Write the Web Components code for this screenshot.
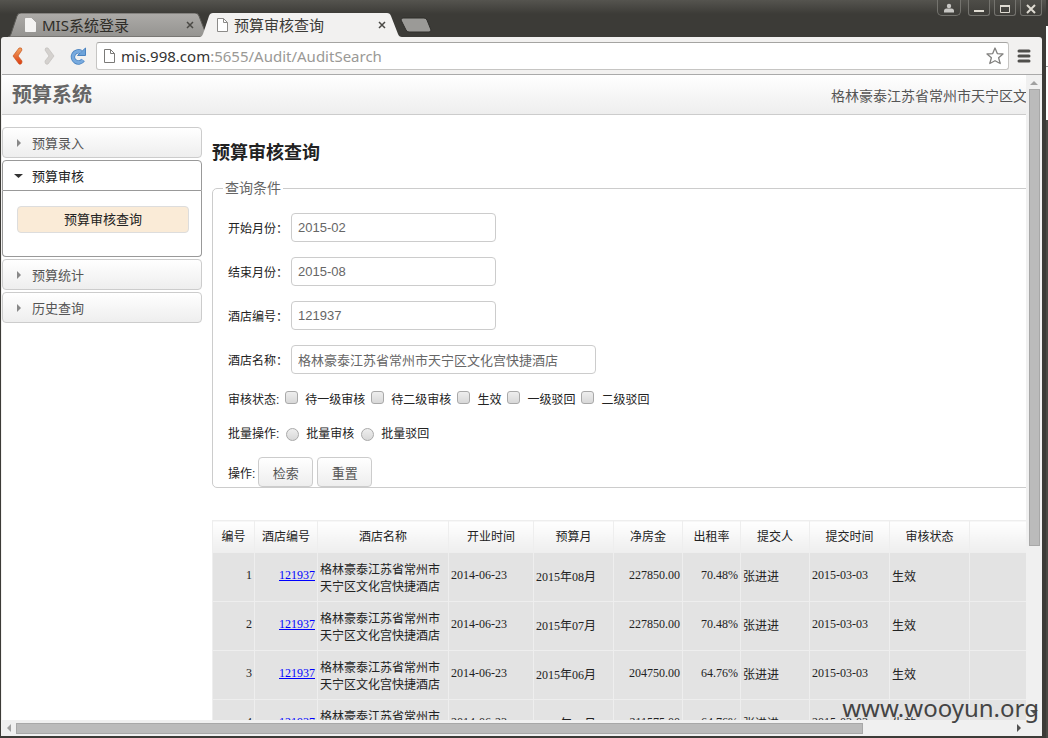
<!DOCTYPE html>
<html lang="zh-CN">
<head>
<meta charset="utf-8">
<title>预算审核查询</title>
<style>
  body {
    margin: 0;
    height: 100vh;
    overflow: hidden;
    background: #3c3b37;
    font-family: "Liberation Sans", "Noto Sans CJK SC", sans-serif;
    font-size: 12px;
    color: #222;
  }
</style>
</head>
<body>
<browser-window>
  <browser-tab slot="tabs" label="MIS系统登录"></browser-tab>
  <browser-tab slot="tabs" label="预算审核查询" active></browser-tab>
  <tool-bar slot="toolbar" host="mis.998.com" path=":5655/Audit/AuditSearch"></tool-bar>
  <page-header brand="预算系统">格林豪泰江苏省常州市天宁区文化宫快捷酒店</page-header>
  <page-layout>
    <side-menu slot="side">
      <menu-section label="预算录入"></menu-section>
      <menu-section label="预算审核" open>预算审核查询</menu-section>
      <menu-section label="预算统计"></menu-section>
      <menu-section label="历史查询"></menu-section>
    </side-menu>
    <search-form></search-form>
    <audit-table></audit-table>
  </page-layout>
</browser-window>
<water-mark>www.wooyun.org</water-mark>

<script>
class BaseElement extends HTMLElement {
  connectedCallback() {
    if (this.shadowRoot) return;
    this.attachShadow({ mode: "open" });
    this.shadowRoot.innerHTML = this.template;
  }
}

const docIcon = (fill, stroke) => `
  <svg width="13" height="16" viewBox="0 0 13 16" aria-hidden="true">
    <path d="M1.500 1.500h6l4 4v9h-10z" fill="${fill}" stroke="${stroke}"/>
    <path d="M7.500 1.500v4h4" fill="none" stroke="${stroke}"/>
  </svg>`;

class BrowserWindow extends BaseElement {
  get template() {
    return `
      <style>
        :host {
          display: flex;
          flex-direction: column;
          height: 100vh;
          box-sizing: border-box;
          padding: 0 6px 2px 1px;
          background:
            linear-gradient(#3c3b37 26px, #fff 26px, #fff 66px, #999 66px, #999 67px, #fff 67px, #fff 120px, #4a4944 120px) right / 2px 100% no-repeat,
            linear-gradient(#55544f, #3c3b37 14px);
        }
        .title {
          display: flex;
          justify-content: space-between;
          height: 37px;
          flex: none;
        }
        .tabs {
          display: flex;
          align-items: flex-end;
          padding-left: 7px;
        }
        .new {
          width: 32px;
          height: 16px;
          margin: 0 0 4px -4px;
          padding: 0;
          border: 0;
          background: none;
        }
        .new svg { display: block; }
        .controls { display: flex; gap: 4px; }
        .controls button {
          width: 22px;
          height: 16px;
          padding: 0;
          border: 1px solid #74736e;
          border-top: 0;
          border-radius: 0 0 3px 3px;
          background: linear-gradient(#4e4d48, #3f3e3a);
        }
        .controls .user {
          width: 24px;
          margin-right: 3px;
          border-radius: 0 0 5px 5px;
        }
        .controls svg { display: block; margin: auto; }
        .frame {
          flex: 1;
          min-height: 0;
          display: flex;
          flex-direction: column;
          background: #f2f1f0;
          border-radius: 3px 3px 0 0;
          padding-left: 1px;
        }
        .view {
          flex: 1;
          min-height: 0;
          display: grid;
          grid-template: minmax(0, 1fr) 16px / minmax(0, 1fr) 16px;
          background: #f0f0f0;
        }
        .page { overflow: hidden; background: #fff; }
        .content { min-width: 1200px; }
      </style>
      <div class="title">
        <div class="tabs">
          <slot name="tabs"></slot>
          <button class="new" aria-label="New tab">
            <svg width="32" height="16" viewBox="0 0 32 16"><path d="M3 1h21q2 0 3 2l4 10q0 2-2 2H9q-2 0-3-2L1 3q0-2 2-2z" fill="#9b9a97" stroke="#2f2e2b"/></svg>
          </button>
        </div>
        <div class="controls">
          <button class="user" aria-label="User">
            <svg width="12" height="14" viewBox="0 0 12 14" fill="#c8c7c4"><circle cx="6" cy="5" r="2.200"/><path d="M1 11.500V10q0-2.500 2.500-2.500h5Q11 7.500 11 10v1.500z"/></svg>
          </button>
          <button aria-label="Minimize">
            <svg width="12" height="14"><path d="M1 9h10v2H1z" fill="#dfdbd2"/></svg>
          </button>
          <button aria-label="Maximize">
            <svg width="12" height="14"><path d="M1.500 4.500h9v7h-9z" fill="none" stroke="#dfdbd2"/><path d="M1 4h10v2H1z" fill="#dfdbd2"/></svg>
          </button>
          <button aria-label="Close">
            <svg width="12" height="14"><path d="M2 4l8 8M10 4l-8 8" stroke="#dfdbd2" stroke-width="2"/></svg>
          </button>
        </div>
      </div>
      <div class="frame">
        <slot name="toolbar"></slot>
        <div class="view">
          <div class="page"><div class="content"><slot></slot></div></div>
          <scroll-bar size="74"></scroll-bar>
          <scroll-bar size="85" horizontal></scroll-bar>
        </div>
      </div>
    `;
  }
}

class BrowserTab extends BaseElement {
  get template() {
    const active = this.hasAttribute("active");
    return `
      <style>
        :host {
          display: block;
          position: relative;
          width: 204px;
          height: 24px;
          font: 15px/24px "Noto Sans", "Noto Sans CJK SC", sans-serif;
          color: #2f2d28;
        }
        :host([active]) {
          z-index: 1;
          margin-left: -12px;
          color: #3c3b37;
        }
        .shape { position: absolute; top: 0; left: 0; }
        .row {
          position: relative;
          display: flex;
          align-items: center;
          gap: 5px;
          padding: 0 16px;
        }
        .label { flex: 1; }
        button {
          display: flex;
          width: 12px;
          height: 12px;
          padding: 0;
          border: 0;
          background: none;
        }
      </style>
      <svg class="shape" width="204" height="24" viewBox="0 0 204 24">
        <defs><linearGradient id="g" x2="0" y2="1"><stop stop-color="#adaba8"/><stop offset="1" stop-color="#949390"/></linearGradient></defs>
        <path d="M0 24q2 0 3-3L9 3q1-3 4-3h174q3 0 4 3l7 18q1 3 4 3z" fill="${active ? "#f2f1f0" : "url(#g)"}" stroke="${active ? "none" : "#5c5b57"}"/>
      </svg>
      <div class="row">
        ${active ? docIcon("#fff", "#8c8b89") : docIcon("#f4f3f2", "#f4f3f2")}
        <span class="label">${this.getAttribute("label")}</span>
        <button aria-label="Close tab">
          <svg width="12" height="12"><path d="M3 3l6 6M9 3l-6 6" stroke="#4a4945" stroke-width="1.500"/></svg>
        </button>
      </div>
    `;
  }
}

class ToolBar extends BaseElement {
  get template() {
    const host = this.getAttribute("host");
    const path = this.getAttribute("path");
    return `
      <style>
        :host {
          display: flex;
          align-items: center;
          height: 37px;
          border-bottom: 1px solid #aaa;
          padding: 0 11px 0 9px;
        }
        button { display: flex; padding: 0; border: 0; background: none; }
        .nav { display: flex; gap: 11px; padding-right: 9px; }
        .url {
          flex: 1;
          display: flex;
          align-items: center;
          gap: 5px;
          height: 26px;
          border: 1px solid #c6c5c3;
          border-top-color: #a5a4a2;
          border-radius: 3px;
          background: #fff;
          padding: 0 4px 0 6px;
        }
        .text {
          flex: 1;
          font: 15px/24px "Noto Sans", sans-serif;
          color: #9a9996;
        }
        .text b { font-weight: normal; color: #333; }
        .menu { margin-left: 8px; }
      </style>
      <div class="nav">
        <button aria-label="Back">
          <svg width="18" height="20" viewBox="0 0 18 20">
            <defs><linearGradient id="o" x2="0" y2="1"><stop stop-color="#f2a560"/><stop offset="1" stop-color="#dc3c12"/></linearGradient></defs>
            <path d="M2 10l6-8q3-1 3 2l-4 6 4 5q0 4-3 3z" fill="url(#o)" stroke="#c8561f" stroke-width=".7"/>
          </svg>
        </button>
        <button aria-label="Forward">
          <svg width="18" height="20" viewBox="0 0 18 20"><path d="M14 10L8 2Q5 1 5 4l4 6-4 5q0 4 3 3z" fill="#d4d1ce" stroke="#c2bfbc" stroke-width=".7"/></svg>
        </button>
        <button aria-label="Reload">
          <svg width="18" height="20" viewBox="0 0 18 20">
            <path d="M12 6A5.500 5.500 0 1 0 14 14" fill="none" stroke="#4a83c0" stroke-width="4.500"/>
            <path d="M16.500 2v7.500H8.500z" fill="#6da3da" stroke="#4a83c0"/>
            <path d="M12 6A5.500 5.500 0 1 0 14 14" fill="none" stroke="#78aade" stroke-width="3"/>
          </svg>
        </button>
      </div>
      <div class="url">
        ${docIcon("#fff", "#7b7a78")}
        <span class="text"><b>${host}</b>${path}</span>
        <button aria-label="Bookmark">
          <svg width="18" height="18" viewBox="0 0 18 18"><path d="M9 1l2.300 5.600 5.700.4-4.400 3.800 1.600 5.700L9 13.700l-5.200 2.800 1.600-5.700L1 7l5.700-.4z" fill="#fff" stroke="#82817f" stroke-width="1.300" stroke-linejoin="round"/></svg>
        </button>
      </div>
      <button class="menu" aria-label="Menu">
        <svg width="14" height="14"><path d="M2 2h10M2 7h10M2 12h10" stroke="#504f4c" stroke-width="3" stroke-linecap="round"/></svg>
      </button>
    `;
  }
}

class ScrollBar extends BaseElement {
  get template() {
    return `
      <style>
        :host {
          display: flex;
          flex-direction: column;
          align-items: center;
          background: #f0f0f0;
        }
        :host([horizontal]) { flex-direction: row; }
        .track { flex: 1; display: flex; flex-direction: inherit; }
        .thumb {
          flex: 0 0 ${this.getAttribute("size")}%;
          box-sizing: border-box;
          width: 11px;
          border: 1px solid #a8a8a8;
          background: #bbb;
        }
        :host([horizontal]) .thumb { width: auto; height: 11px; }
        svg { flex: none; }
      </style>
      ${
        this.hasAttribute("horizontal")
          ? `<svg width="14" height="14"><path d="M9 3v8L5 7z" fill="#a0a0a0"/></svg>
             <div class="track"><div class="thumb"></div></div>
             <svg width="14" height="14"><path d="M5 3v8l4-4z" fill="#505050"/></svg>`
          : `<svg width="14" height="14"><path d="M3 10h8L7 6z" fill="#a0a0a0"/></svg>
             <div class="track"><div class="thumb"></div></div>
             <svg width="14" height="14"><path d="M3 4h8l-4 4z" fill="#505050"/></svg>`
      }
    `;
  }
}

class PageHeader extends BaseElement {
  get template() {
    return `
      <style>
        :host {
          display: flex;
          align-items: center;
          justify-content: space-between;
          height: 39px;
          padding: 0 91px 0 10px;
          border-bottom: 1px solid #ccc;
          background: linear-gradient(#fff, #eee);
          color: #555;
          font-size: 14px;
        }
        h1 { margin: 0; font-size: 20px; line-height: 24px; color: #666; }
      </style>
      <h1>${this.getAttribute("brand")}</h1>
      <span><slot></slot></span>
    `;
  }
}

class PageLayout extends BaseElement {
  get template() {
    return `
      <style>
        :host {
          display: grid;
          grid-template-columns: 200px minmax(0, 1fr);
          gap: 10px;
          padding-top: 12px;
        }
        h2 { margin: 14px 0 13px; font-size: 18px; line-height: 24px; }
      </style>
      <slot name="side"></slot>
      <main>
        <h2>预算审核查询</h2>
        <slot></slot>
      </main>
    `;
  }
}

class SideMenu extends BaseElement {
  get template() {
    return `
      <style>
        :host { display: flex; flex-direction: column; gap: 2px; }
      </style>
      <slot></slot>
    `;
  }
}

class MenuSection extends BaseElement {
  get template() {
    const open = this.hasAttribute("open");
    return `
      <style>
        :host { display: block; font-size: 13px; }
        .head {
          display: flex;
          align-items: center;
          gap: 8px;
          box-sizing: border-box;
          width: 100%;
          height: 31px;
          padding: 0 10px;
          border: 1px solid #ccc;
          border-radius: 4px;
          background: linear-gradient(#fff, #eee);
          font: inherit;
          color: #555;
        }
        :host([open]) .head {
          border-color: #999;
          border-radius: 4px 4px 0 0;
          background: #fff;
          color: #222;
        }
        .panel {
          border: 1px solid #999;
          border-top: 0;
          border-radius: 0 0 4px 4px;
          padding: 15px 12px 23px 14px;
        }
        .item {
          display: block;
          width: 100%;
          height: 27px;
          padding: 0 0 2px;
          border: 1px solid #ddd;
          border-radius: 4px;
          background: #faebd7;
          font: inherit;
          color: #222;
        }
      </style>
      <button class="head" aria-expanded="${open}">
        <svg width="11" height="12" aria-hidden="true"><path d="${open ? "M1 4h9L5.500 8z" : "M4 2v8l4-4z"}" fill="${open ? "#333" : "#888"}"/></svg>
        ${this.getAttribute("label")}
      </button>
      ${open ? `<div class="panel"><button class="item"><slot></slot></button></div>` : ""}
    `;
  }
}

class SearchForm extends BaseElement {
  get template() {
    const fields = [
      ["start", "开始月份", "2015-02"],
      ["end", "结束月份", "2015-08"],
      ["code", "酒店编号", "121937"],
      ["name", "酒店名称", "格林豪泰江苏省常州市天宁区文化宫快捷酒店"],
    ];
    const states = ["待一级审核", "待二级审核", "生效", "一级驳回", "二级驳回"];
    const batch = ["批量审核", "批量驳回"];
    return `
      <style>
        :host { display: block; margin-bottom: 32px; }
        fieldset {
          margin: 0;
          padding: 15px 15px 0;
          border: 1px solid #ccc;
          border-radius: 5px;
        }
        legend {
          margin-left: -5px;
          padding: 0 2px;
          font-size: 14px;
          line-height: 20px;
          color: #666;
        }
        form { display: flex; flex-direction: column; gap: 15px; }
        .field { display: flex; align-items: center; gap: 3px; height: 29px; }
        /* the TC face centres the full-width colon */
        .field label { font-family: "Liberation Sans", "Noto Sans CJK TC", sans-serif; }
        input[type="text"] {
          box-sizing: border-box;
          width: 205px;
          height: 29px;
          padding: 0 6px;
          border: 1px solid #ccc;
          border-radius: 4px;
          background: #fff;
          font: inherit;
          font-size: 13px;
          color: #666;
        }
        #name { width: 305px; }
        .options { display: flex; align-items: baseline; gap: 6px; line-height: 22px; }
        .options label { display: flex; align-items: baseline; gap: 7px; }
        .batch { gap: 7px; line-height: 16px; }
        .batch, .batch label { align-items: center; }
        .options input {
          appearance: none;
          box-sizing: border-box;
          width: 13px;
          height: 13px;
          margin: 0;
          border: 1px solid #a9a9a9;
          border-radius: 3px;
          background: linear-gradient(#eee, #d8d8d8);
        }
        .options input[type="radio"] { border-radius: 50%; }
        .actions { display: flex; align-items: center; gap: 4px; }
        .actions span { margin-right: -1px; }
        .actions button {
          width: 55px;
          height: 30px;
          padding: 0;
          border: 1px solid #ccc;
          border-radius: 4px;
          background: linear-gradient(#fff, #eee);
          font: inherit;
          font-size: 13px;
          color: #555;
        }
      </style>
      <fieldset>
        <legend>查询条件</legend>
        <form>
          ${fields
            .map(
              ([id, label, value]) => `
            <div class="field">
              <label for="${id}">${label}：</label>
              <input type="text" id="${id}" value="${value}">
            </div>`
            )
            .join("")}
          <div class="options">
            <span>审核状态:</span>
            ${states.map((s) => `<label><input type="checkbox">${s}</label>`).join("")}
          </div>
          <div class="options batch">
            <span>批量操作:</span>
            ${batch.map((s) => `<label><input type="radio" name="batch">${s}</label>`).join("")}
          </div>
          <div class="actions">
            <span>操作:</span>
            <button type="button">检索</button>
            <button type="reset">重置</button>
          </div>
        </form>
      </fieldset>
    `;
  }
}

class AuditTable extends BaseElement {
  get template() {
    const columns = [
      ["编号", 42],
      ["酒店编号", 63],
      ["酒店名称", 131],
      ["开业时间", 85],
      ["预算月", 80],
      ["净房金", 69],
      ["出租率", 58],
      ["提交人", 69],
      ["提交时间", 80],
      ["审核状态", 80],
    ];
    const rows = [
      ["2015年08月", "227850.00", "70.48%"],
      ["2015年07月", "227850.00", "70.48%"],
      ["2015年06月", "204750.00", "64.76%"],
      ["2015年05月", "211575.00", "64.76%"],
    ];
    return `
      <style>
        :host {
          display: block;
          font: 12px/17px "Liberation Serif", "Noto Sans CJK SC", serif;
        }
        table { width: 100%; table-layout: fixed; border-collapse: collapse; }
        th, td { box-sizing: border-box; border: 1px solid #eee; padding: 0 2px; }
        th {
          height: 32px;
          padding-top: 2px;
          background: linear-gradient(#fff, #eee);
          font-weight: normal;
        }
        td { height: 49px; background: #e3e3e3; }
        .num { text-align: right; }
        .num, .date { padding-bottom: 3px; }
        .name { padding-top: 3px; }
        a { color: #00f; }
      </style>
      <table>
        <colgroup>${columns.map(([, w]) => `<col style="width: ${w}px">`).join("")}<col></colgroup>
        <thead>
          <tr>${columns.map(([name]) => `<th>${name}</th>`).join("")}<th></th></tr>
        </thead>
        <tbody>
          ${rows
            .map(
              ([month, amount, rate], i) => `
            <tr>
              <td class="num">${i + 1}</td>
              <td class="num"><a href="#">121937</a></td>
              <td class="name">格林豪泰江苏省常州市天宁区文化宫快捷酒店</td>
              <td class="date">2014-06-23</td>
              <td>${month}</td>
              <td class="num">${amount}</td>
              <td class="num">${rate}</td>
              <td>张进进</td>
              <td class="date">2015-03-03</td>
              <td>生效</td>
              <td></td>
            </tr>`
            )
            .join("")}
        </tbody>
      </table>
    `;
  }
}

class WaterMark extends BaseElement {
  get template() {
    return `
      <style>
        :host {
          position: absolute;
          right: 9px;
          bottom: 14px;
          font: 24px/32px "Noto Sans", sans-serif;
          color: #444;
          pointer-events: none;
        }
      </style>
      <slot></slot>
    `;
  }
}

customElements.define("browser-window", BrowserWindow);
customElements.define("browser-tab", BrowserTab);
customElements.define("tool-bar", ToolBar);
customElements.define("scroll-bar", ScrollBar);
customElements.define("page-header", PageHeader);
customElements.define("page-layout", PageLayout);
customElements.define("side-menu", SideMenu);
customElements.define("menu-section", MenuSection);
customElements.define("search-form", SearchForm);
customElements.define("audit-table", AuditTable);
customElements.define("water-mark", WaterMark);
</script>
</body>
</html>
